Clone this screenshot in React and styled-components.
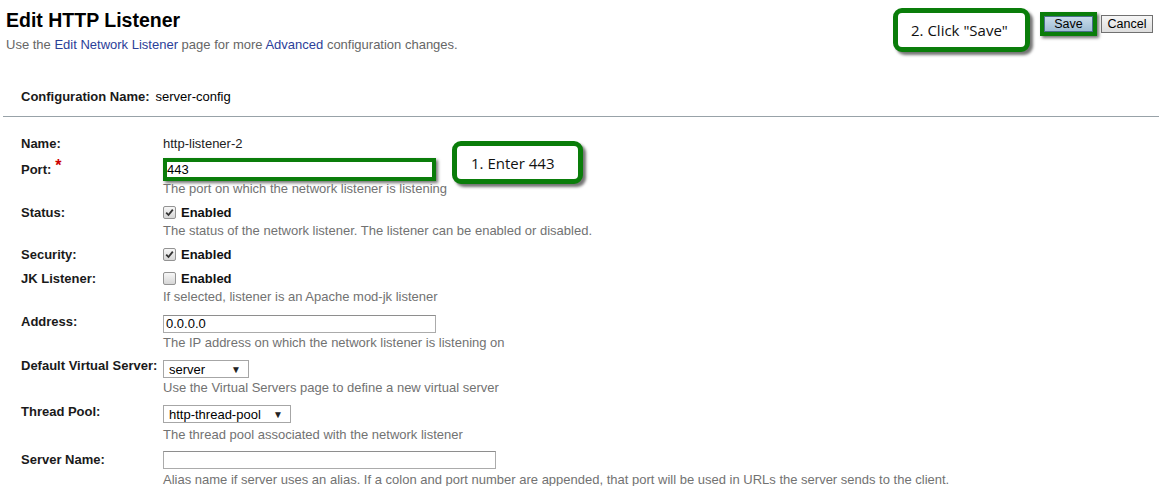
import React from 'react';
import styled, { createGlobalStyle } from 'styled-components';

const GlobalStyle = createGlobalStyle`
	html, body {
		margin: 0;
		padding: 0;
		background: #fff;
		font-family: "Liberation Sans", Arial, sans-serif;
	}
`;

const green = '#0a7d0a';

const Page = styled.div`
	width: 1159px;
	height: 486px;
	overflow: hidden;
	background: #fff;
`;

const Header = styled.div`
	display: flex;
	justify-content: space-between;
	align-items: flex-start;
	padding: 0 6px;
`;

const Title = styled.h1`
	margin: 8px 0 0;
	font-size: 19.5px;
	line-height: 24px;
	font-weight: bold;
	color: #000;
`;

const Intro = styled.div`
	margin-top: 5px;
	font-size: 13px;
	line-height: 16px;
	color: #666;
`;

const Link = styled.a`
	color: #2b4099;
	text-decoration: none;
`;

const Actions = styled.div`
	display: flex;
	align-items: flex-start;
`;

const Callout = styled.div`
	box-sizing: border-box;
	width: ${(p) => p.$w}px;
	height: ${(p) => p.$h}px;
	display: flex;
	align-items: center;
	padding-left: ${(p) => p.$pl}px;
	border: 5px solid ${green};
	border-radius: 9px;
	background: #fff;
	box-shadow: 3px 3px 3px rgba(0, 0, 0, 0.55);
	font-family: "Open Sans", "Noto Sans", sans-serif;
	font-size: 15px;
	color: #111;
	white-space: nowrap;
`;

const HeaderCallout = styled(Callout)`
	margin-top: 8px;
	margin-right: 10px;
`;

const PortCallout = styled(Callout)`
	position: absolute;
	left: 289px;
	top: -18px;
`;

const Highlight = styled.div`
	box-sizing: border-box;
	border: 4px solid ${green};
	box-shadow: 2px 2px 3px rgba(0, 0, 0, 0.55);
	background: #fff;
`;

const SaveFrame = styled(Highlight)`
	margin-top: 12px;
	width: 57px;
	height: 24px;
	display: flex;
`;

const SaveButton = styled.button`
	flex: 1;
	margin: 0;
	padding: 0;
	border: 1px solid #4a6f8a;
	background: linear-gradient(#c9dcea, #9fbdd4);
	font-family: "Liberation Sans", Arial, sans-serif;
	font-size: 12.5px;
	color: #000;
	line-height: 14px;
`;

const CancelButton = styled.button`
	margin: 15px 0 0 4px;
	padding: 0;
	width: 52px;
	height: 18px;
	border: 1px solid #707070;
	background: linear-gradient(#f6f6f6, #dddddd);
	font-family: "Liberation Sans", Arial, sans-serif;
	font-size: 12.5px;
	color: #000;
	line-height: 14px;
`;

const ConfigLine = styled.div`
	margin-top: 36px;
	padding-left: 21px;
	display: flex;
	gap: 6px;
	font-size: 13px;
	line-height: 16px;
`;

const Bold = styled.span`
	font-weight: bold;
	color: #1a1a1a;
`;

const Rule = styled.div`
	margin: 11px 0 0 3px;
	height: 1px;
	background: #98a2a8;
`;

const Form = styled.div`
	padding: 19px 0 0 21px;
`;

const Row = styled.div`
	display: grid;
	grid-template-columns: 142px 1fr;
	margin-top: ${(p) => p.$gap || 0}px;
`;

const Label = styled.div`
	padding-top: ${(p) => p.$pt || 0}px;
	font-size: 13px;
	line-height: 15px;
	font-weight: bold;
	color: #1a1a1a;
	white-space: nowrap;
`;

const Required = styled.span`
	color: #cc0000;
	font-size: 16px;
	line-height: 0;
	margin-left: 4px;
	position: relative;
	top: -3px;
`;

const Value = styled.div`
	position: relative;
	display: flex;
	flex-direction: column;
	align-items: flex-start;
`;

const Plain = styled.div`
	font-size: 13px;
	line-height: 15px;
	color: #222;
`;

const Help = styled.div`
	margin-top: ${(p) => p.$mt || 0}px;
	font-size: 13px;
	line-height: 15px;
	color: #727272;
	white-space: nowrap;
`;

const PortFrame = styled(Highlight)`
	width: 273px;
	height: 23px;
	margin-top: -1px;
`;

const PortText = styled.div`
	padding-left: 0;
	font-size: 13px;
	line-height: 15px;
	color: #000;
`;

const TextBox = styled.div`
	box-sizing: border-box;
	width: ${(p) => p.$w}px;
	height: 18px;
	margin-top: ${(p) => p.$mt || 0}px;
	padding-left: 2px;
	border: 1px solid #ababab;
	border-top-color: #8e8e8e;
	font-size: 13px;
	line-height: 16px;
	color: #000;
`;

const Select = styled.div`
	box-sizing: border-box;
	width: ${(p) => p.$w}px;
	height: 18px;
	margin-top: ${(p) => p.$mt || 0}px;
	padding: 0 7px 0 5px;
	display: flex;
	justify-content: space-between;
	align-items: center;
	border: 1px solid #a6a6a6;
	font-size: 13px;
	color: #000;
`;

const Arrow = styled.span`
	font-size: 10px;
	color: #222;
`;

const CheckLine = styled.div`
	display: flex;
	align-items: center;
	gap: 5px;
	height: 15px;
	font-size: 13px;
	font-weight: bold;
	color: #111;
`;

const Box = styled.span`
	box-sizing: border-box;
	width: 13px;
	height: 13px;
	display: flex;
	align-items: center;
	justify-content: center;
	border: 1px solid #939393;
	border-radius: 2px;
	background: linear-gradient(#f7f7f7, #d6d6d6);
`;

const Check = ({ checked }) => (
	<CheckLine>
		<Box>
			{checked && (
				<svg width="9" height="9" viewBox="0 0 9 9">
					<path d="M1.2 4.6 L3.5 7 L7.8 1.6" fill="none" stroke="#333" strokeWidth="1.8" />
				</svg>
			)}
		</Box>
		Enabled
	</CheckLine>
);

export default function App() {
	return (
		<Page>
			<GlobalStyle />
			<Header>
				<div>
					<Title>Edit HTTP Listener</Title>
					<Intro>
						Use the <Link>Edit Network Listener</Link> page for more <Link>Advanced</Link> configuration changes.
					</Intro>
				</div>
				<Actions>
					<HeaderCallout $w={137} $h={44} $pl={13}>2. Click "Save"</HeaderCallout>
					<SaveFrame>
						<SaveButton>Save</SaveButton>
					</SaveFrame>
					<CancelButton>Cancel</CancelButton>
				</Actions>
			</Header>

			<ConfigLine>
				<Bold>Configuration Name:</Bold>
				<span>server-config</span>
			</ConfigLine>
			<Rule />

			<Form>
				<Row>
					<Label>Name:</Label>
					<Plain>http-listener-2</Plain>
				</Row>
				<Row $gap={8}>
					<Label $pt={3}>
						Port:<Required>*</Required>
					</Label>
					<Value>
						<PortFrame>
							<PortText>443</PortText>
						</PortFrame>
						<Help>The port on which the network listener is listening</Help>
						<PortCallout $w={131} $h={43} $pl={14}>1. Enter 443</PortCallout>
					</Value>
				</Row>
				<Row $gap={9}>
					<Label>Status:</Label>
					<Value>
						<Check checked />
						<Help $mt={3}>The status of the network listener. The listener can be enabled or disabled.</Help>
					</Value>
				</Row>
				<Row $gap={9}>
					<Label>Security:</Label>
					<Value>
						<Check checked />
					</Value>
				</Row>
				<Row $gap={9}>
					<Label>JK Listener:</Label>
					<Value>
						<Check />
						<Help $mt={3}>If selected, listener is an Apache mod-jk listener</Help>
					</Value>
				</Row>
				<Row $gap={10}>
					<Label>Address:</Label>
					<Value>
						<TextBox $w={273} $mt={1}>0.0.0.0</TextBox>
						<Help $mt={2}>The IP address on which the network listener is listening on</Help>
					</Value>
				</Row>
				<Row $gap={8}>
					<Label>Default Virtual Server:</Label>
					<Value>
						<Select $w={86} $mt={2}>
							server<Arrow>▼</Arrow>
						</Select>
						<Help $mt={2}>Use the Virtual Servers page to define a new virtual server</Help>
					</Value>
				</Row>
				<Row $gap={9}>
					<Label>Thread Pool:</Label>
					<Value>
						<Select $w={128} $mt={1}>
							http-thread-pool<Arrow>▼</Arrow>
						</Select>
						<Help $mt={4}>The thread pool associated with the network listener</Help>
					</Value>
				</Row>
				<Row $gap={9}>
					<Label $pt={1}>Server Name:</Label>
					<Value>
						<TextBox $w={333} />
						<Help $mt={3}>
							Alias name if server uses an alias. If a colon and port number are appended, that port will be used in URLs the server sends to the client.
						</Help>
					</Value>
				</Row>
			</Form>
		</Page>
	);
}
